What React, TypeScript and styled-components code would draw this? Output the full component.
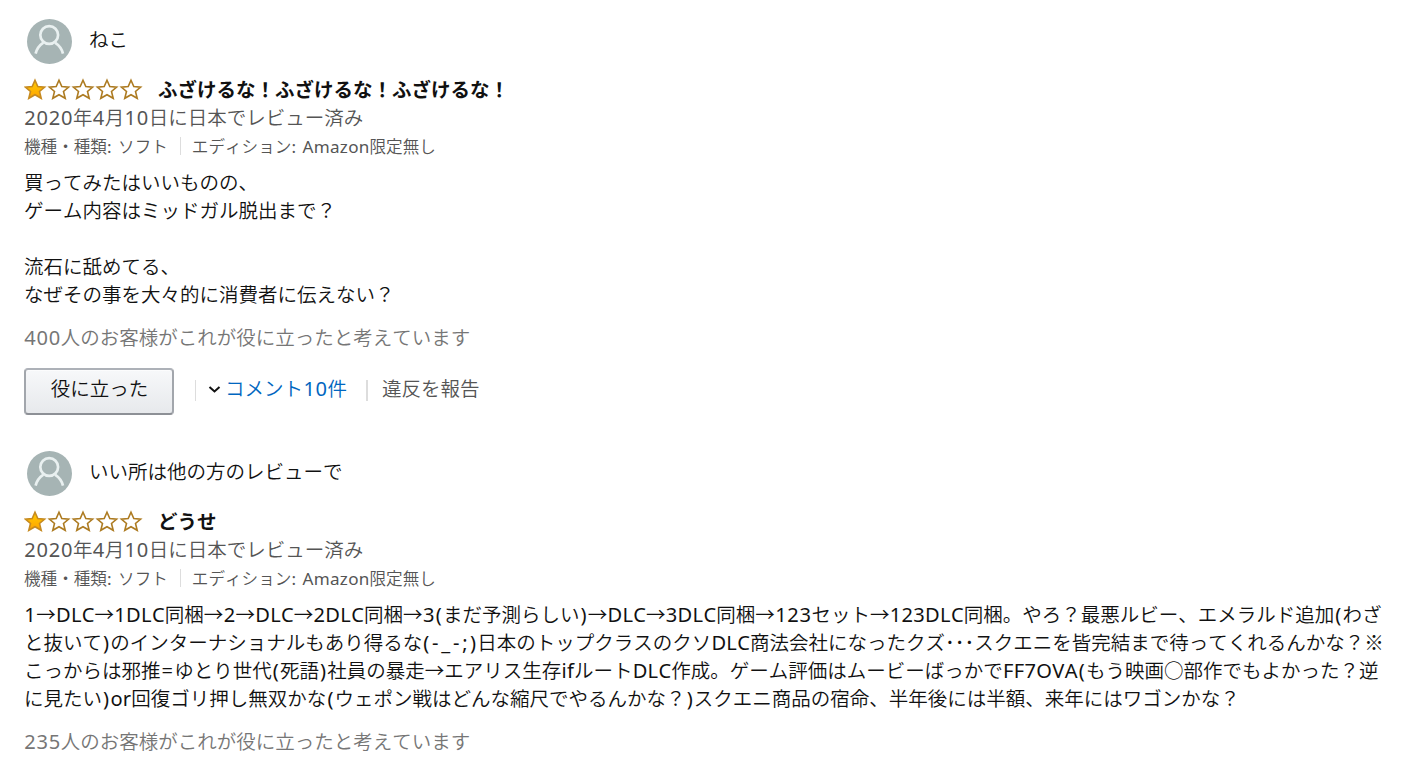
import React from 'react';
import styled, { createGlobalStyle } from 'styled-components';

const colors = {
	text: '#111111',
	secondary: '#555555',
	tertiary: '#767676',
	link: '#0066c0',
	divider: '#dddddd',
};

const GlobalStyle = createGlobalStyle`
	body {
		margin: 0;
		background: #ffffff;
		color: ${colors.text};
		font-family: 'Noto Sans CJK JP', 'Noto Sans', sans-serif;
		font-size: 19.5px;
		font-weight: 350;
		font-kerning: none;
		line-height: 28px;
	}
`;

const StyledPage = styled.main`
	height: 769px;
	overflow: hidden;
	padding: 19px 24px 0;
	box-sizing: border-box;
`;

const StyledReview = styled.article`
	height: 432px;
	white-space: nowrap;
`;

const StyledProfile = styled.div`
	display: flex;
	align-items: flex-start;
	gap: 17px;
	height: 56px;
	padding-left: 3px;

	svg {
		width: 45px;
		height: 45px;
	}
`;

const StyledName = styled.span`
	padding-top: 6px;
`;

const StyledHeading = styled.div`
	display: flex;
	align-items: center;
	gap: 14px;
	height: 28px;
`;

const StyledStars = styled.svg`
	display: block;
	width: 120px;
	height: 24px;
`;

const StyledTitle = styled.h3`
	margin: 0;
	font-size: 19.5px;
	font-weight: 700;
`;

const StyledDate = styled.div`
	height: 29px;
	color: ${colors.secondary};
`;

const StyledVariants = styled.div`
	display: flex;
	align-items: center;
	height: 28px;
	margin-bottom: 8px;
	color: ${colors.secondary};
	font-size: 16.6px;
	word-spacing: 1.5px;
`;

const StyledDivider = styled.i<{ size: number; left: number; right: number; thick?: boolean }>`
	width: ${({ thick }) => (thick ? '2px' : '1px')};
	height: ${({ size }) => size}px;
	margin: 0 ${({ right }) => right}px 0 ${({ left }) => left}px;
	background: ${colors.divider};
`;

const StyledBody = styled.p`
	margin: 0 0 15px;
`;

const StyledLine = styled.span`
	display: block;
	height: 28px;
`;

const StyledHelpful = styled.div`
	height: 28px;
	color: ${colors.tertiary};
`;

const StyledActions = styled.div`
	display: flex;
	align-items: center;
	height: 47px;
	margin-top: 17px;

	${StyledDivider} {
		margin-bottom: 3px;
	}
`;

const StyledButton = styled.button`
	width: 150px;
	height: 47px;
	padding: 0 0 7px 1px;
	border: 2px solid;
	border-color: #adb1b8 #a2a6ac #8d9096;
	border-radius: 4px;
	background: linear-gradient(to bottom, #f7f8fa, #e7e9ec);
	box-shadow: inset 0 1px 0 rgba(255, 255, 255, 0.6);
	color: ${colors.text};
	font: inherit;
`;

const StyledComments = styled.a`
	display: flex;
	align-items: center;
	color: ${colors.link};
	padding-bottom: 7px;

	svg {
		width: 13px;
		height: 8px;
		margin: 4px 4px 0 0;
	}
`;

const StyledReport = styled.a`
	color: ${colors.secondary};
	padding-bottom: 7px;
`;

const StyledLatin = styled.span<{ spacing: number }>`
	margin: 0 ${({ spacing }) => -spacing / 2}em 0 ${({ spacing }) => spacing / 2}em;
	font-family: 'Noto Sans', sans-serif;
	font-size: 1.03em;
	font-weight: 400;
	line-height: 0;
	letter-spacing: ${({ spacing }) => spacing}em;
`;

const spacingOf = (run: string) => {
	if (/[()=]/.test(run)) return 0.11;
	if (/[-_;]/.test(run)) return 0.14;
	if (/^\d+$/.test(run)) return 0.037;
	return 0.016;
};

// Latin runs use their own face, everything else stays full width
const Mixed = ({ children }: { children: string }) => (
	<span>
		{children.split(/([()=]+|[-_;]+|[\w: ]+)/).map((part, i) =>
			/^[\x20-\x7e]+$/.test(part) ? (
				<StyledLatin key={i} spacing={spacingOf(part)}>
					{part}
				</StyledLatin>
			) : (
				part
			)
		)}
	</span>
);

const Avatar = () => (
	<svg viewBox='0 0 45 45' fill='none'>
		<circle cx='22.5' cy='22.5' r='22.5' fill='#a6b4b4' />
		<g stroke='#e9f0f0' strokeWidth='2.7'>
			<circle cx='22.2' cy='16' r='8.9' />
			<path d='M8.6 34.6C9.8 29.8 12.4 26.2 16.4 23.6M28 23.6C32 26.2 34.8 29.8 36 34.6' />
		</g>
	</svg>
);

const STAR = 'M11 2.2L13.8 8.6L20.6 9.1L15.5 13.5L17.2 20.3L11 16.7L4.8 20.3L6.5 13.5L1.4 9.1L8.2 8.6Z';

const Stars = ({ rating }: { rating: number }) => (
	<StyledStars viewBox='0 0 120 24'>
		<defs>
			<linearGradient id='gold' x1='0' y1='0' x2='0' y2='1'>
				<stop offset='0' stopColor='#ffce00' />
				<stop offset='1' stopColor='#ffa200' />
			</linearGradient>
		</defs>
		{[0, 1, 2, 3, 4].map((n) => (
			<path
				key={n}
				d={STAR}
				transform={`translate(${n * 24} 1)`}
				fill={n < rating ? 'url(#gold)' : '#ffffff'}
				stroke={n < rating ? '#c68a20' : '#ad7b21'}
				strokeWidth='1.6'
			/>
		))}
	</StyledStars>
);

interface ReviewProps {
	name: string;
	title: string;
	lines: string[];
	helpful: number;
	comments?: number;
}

const Review = ({ name, title, lines, helpful, comments }: ReviewProps) => (
	<StyledReview>
		<StyledProfile>
			<Avatar />
			<StyledName>{name}</StyledName>
		</StyledProfile>
		<StyledHeading>
			<Stars rating={1} />
			<StyledTitle>{title}</StyledTitle>
		</StyledHeading>
		<StyledDate>
			<Mixed>2020年4月10日に日本でレビュー済み</Mixed>
		</StyledDate>
		<StyledVariants>
			<Mixed>機種・種類: ソフト</Mixed>
			<StyledDivider size={18} left={12} right={11} />
			<Mixed>エディション: Amazon限定無し</Mixed>
		</StyledVariants>
		<StyledBody>
			{lines.map((line, i) => (
				<StyledLine key={i}>
					<Mixed>{line}</Mixed>
				</StyledLine>
			))}
		</StyledBody>
		<StyledHelpful>
			<Mixed>{`${helpful}人のお客様がこれが役に立ったと考えています`}</Mixed>
		</StyledHelpful>
		{comments && (
			<StyledActions>
				<StyledButton type='button'>役に立った</StyledButton>
				<StyledDivider size={21} left={21} right={12} />
				<StyledComments>
					<svg viewBox='0 0 13 8' fill='none' stroke='#111111' strokeWidth='2'>
						<path d='M1.5 1L6.5 5.5L11.5 1' />
					</svg>
					<Mixed>{`コメント${comments}件`}</Mixed>
				</StyledComments>
				<StyledDivider size={21} left={19} right={14} thick />
				<StyledReport>違反を報告</StyledReport>
			</StyledActions>
		)}
	</StyledReview>
);

const reviews: ReviewProps[] = [
	{
		name: 'ねこ',
		title: 'ふざけるな！ふざけるな！ふざけるな！',
		lines: [
			'買ってみたはいいものの、',
			'ゲーム内容はミッドガル脱出まで？',
			'',
			'流石に舐めてる、',
			'なぜその事を大々的に消費者に伝えない？',
		],
		helpful: 400,
		comments: 10,
	},
	{
		name: 'いい所は他の方のレビューで',
		title: 'どうせ',
		lines: [
			'1→DLC→1DLC同梱→2→DLC→2DLC同梱→3(まだ予測らしい)→DLC→3DLC同梱→123セット→123DLC同梱。やろ？最悪ルビー、エメラルド追加(わざ',
			'と抜いて)のインターナショナルもあり得るな(-_-;)日本のトップクラスのクソDLC商法会社になったクズ･･･スクエニを皆完結まで待ってくれるんかな？※',
			'こっからは邪推=ゆとり世代(死語)社員の暴走→エアリス生存ifルートDLC作成。ゲーム評価はムービーばっかでFF7OVA(もう映画○部作でもよかった？逆',
			'に見たい)or回復ゴリ押し無双かな(ウェポン戦はどんな縮尺でやるんかな？)スクエニ商品の宿命、半年後には半額、来年にはワゴンかな？',
		],
		helpful: 235,
	},
];

const App = () => (
	<>
		<GlobalStyle />
		<StyledPage>
			{reviews.map((review) => (
				<Review key={review.name} {...review} />
			))}
		</StyledPage>
	</>
);

export default App;
